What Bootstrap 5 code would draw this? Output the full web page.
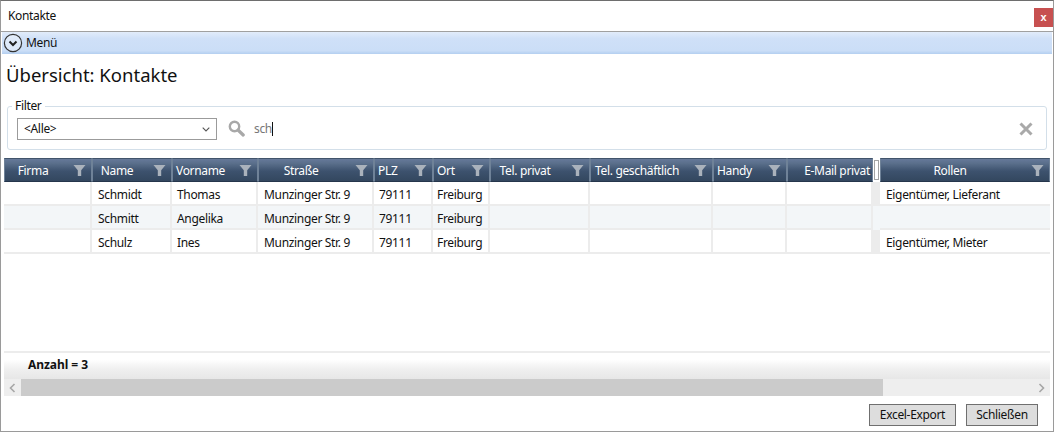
<!DOCTYPE html>
<html lang="de">
<head>
<meta charset="utf-8">
<title>Kontakte</title>
<link href="https://cdn.jsdelivr.net/npm/bootstrap@5.3.0/dist/css/bootstrap.min.css" rel="stylesheet">
<style>
html,body{height:100%;}
body{margin:0;background:#fff;color:#111;font:12px/16px "Noto Sans",sans-serif;letter-spacing:-.33px;overflow:hidden;}
.win{width:1054px;height:432px;border:1px solid #9a9a9a;border-top-color:#6e6e6e;display:flex;flex-direction:column;}
.titlebar{height:30px;padding:0 0 0 7px;flex:none;}
.wintitle{margin-top:7px;}
.closer{width:19px;height:19px;margin-top:7px;background:#c75050;color:#fff;font:bold 11px/17px "Liberation Sans",sans-serif;text-align:center;border:0;padding:0;}
.inner{flex:1;border-top:1px solid #a0a0a0;display:flex;flex-direction:column;min-height:0;}
.menubar{height:22px;margin:0 0 0 1px;width:1050px;background:linear-gradient(#e2ecfa 0,#cfe0f8 30%,#cbdef7 85%,#b3cff0 100%);display:flex;align-items:center;gap:3px;padding-left:1px;flex:none;}
.pagehead{font-size:18.5px;line-height:24px;font-weight:400;letter-spacing:0;margin:9px 0 0 5px;color:#111;flex:none;}
.filterbox{margin:19px 6px 0 6px;height:44px;border:1px solid #d3dfe9;border-radius:3px;padding:0 9px;position:relative;flex:none;width:1040px;}
.filterbox legend{float:none;width:auto;font-size:12px;line-height:14px;margin:-8px 0 0 -5px;padding:0 3px;display:block;position:absolute;background:#fff;}
.pick{width:200px;height:22px;margin-top:11px;border:1px solid #9b9b9b;padding:0 6px;display:flex;align-items:center;justify-content:space-between;}
.lens{margin:13px 0 0 11px;}
.term{color:#777;margin:11px 0 0 9px;line-height:22px;}
.caret{display:inline-block;width:1px;height:14px;background:#111;vertical-align:-3px;}
.wipe{margin:15px 4px 0 auto;}
.gridtable{table-layout:fixed;width:1046px;margin:8px 0 0 3px;border-collapse:separate;border-spacing:0;flex:none;}
.gridtable th{height:24px;padding:0;background:linear-gradient(#66799a 0,#5a6f8b 20%,#3d526e 55%,#33475f 100%);color:#fff;font-weight:400;border:1px solid #6f8298;border-bottom-color:#25364c;border-top-color:#42546b;}
.gridtable td{height:24px;padding:3px 0 0 5px;border-right:2px solid #ececec;border-bottom:2px solid #ececec;line-height:18px;background:#fff;white-space:nowrap;overflow:hidden;color:#111;}
.gridtable tr.alt td{background:#f3f6f8;}
.gridtable td:nth-child(2),.gridtable td:nth-child(4){padding-left:6px;}
.gridtable td:nth-child(6){padding-left:4px;}
.gridtable td.split{background:#ececec;padding:0;border:0;}
.gridtable td.last{border-right:0;padding-left:6px;}
.gridtable th.split{background:#fff;border:0;padding:0;}
.thin{display:flex;align-items:center;height:100%;padding:2px 5px 0 3px;}
.thin span{flex:1;white-space:nowrap;}
.thin .midwide{text-align:center;padding-right:15px;}
.thin .endtxt{text-align:right;margin-right:-3px;}
.thin .nudge{padding-left:1px;}
.funnel{margin-top:-2px;flex:none;}
.grip{display:block;width:5px;height:20px;background:#fff;border:1px solid #a4a4a4;margin:0 auto;}
.spacer{flex:1;min-height:0;}
.sumbar{margin-left:3px;width:1046px;height:28px;border-top:2px solid #ececec;background:linear-gradient(#fff 0,#fff 25%,#f0f0f0 60%,#e7e7e7 100%);padding:4px 0 0 24px;font-weight:700;letter-spacing:-.05px;flex:none;}
.hscroll{margin-left:3px;width:1046px;height:17px;background:#eee;display:flex;align-items:center;flex:none;}
.hscroll i{display:flex;width:17px;height:17px;align-items:center;justify-content:center;flex:none;}
.thumbbar{width:862px;height:17px;background:#cbcbcb;flex:none;}
.footbar{height:35px;padding:8px 15px 0 0;gap:10px;flex:none;}
.graybtn{height:22px;background:#dddddd;border:1px solid #6f6f6f;font:12px/18px "Noto Sans",sans-serif;letter-spacing:-.33px;color:#111;padding:0;border-radius:0;}
.w1{width:87px;}.w2{width:72px;}
</style>
</head>
<body>
<div class="win">
  <div class="titlebar d-flex justify-content-between">
    <span class="wintitle">Kontakte</span>
    <button class="closer" type="button">x</button>
  </div>
  <div class="inner">
    <div class="menubar">
      <svg width="20" height="20" viewBox="0 0 20 20"><circle cx="10" cy="10" r="8.6" fill="#fff" fill-opacity=".35" stroke="#333" stroke-width="1.2"/><path d="M6.5 8.5 10 12l3.5-3.5" fill="none" stroke="#222" stroke-width="2"/></svg>
      <span>Menü</span>
    </div>
    <h1 class="pagehead">Übersicht: Kontakte</h1>
    <fieldset class="filterbox d-flex">
      <legend>Filter</legend>
      <div class="pick"><span>&lt;Alle&gt;</span><svg width="8" height="5" viewBox="0 0 8 5"><path d="M.7.7 4 4 7.3.7" fill="none" stroke="#555" stroke-width="1.1"/></svg></div>
      <svg class="lens" width="17" height="17" viewBox="0 0 17 17"><circle cx="6.5" cy="6.5" r="4.7" fill="none" stroke="#a8a8a8" stroke-width="2.4"/><path d="M10 10l5.2 5" stroke="#a8a8a8" stroke-width="3.2" stroke-linecap="round"/></svg>
      <div class="term">sch<span class="caret"></span></div>
      <svg class="wipe" width="14" height="14" viewBox="0 0 14 14"><path d="M1.5 1.5l11 11M12.5 1.5l-11 11" stroke="#a9a9a9" stroke-width="3"/></svg>
    </fieldset>
    <table class="gridtable">
      <colgroup><col style="width:88px"><col style="width:80px"><col style="width:86px"><col style="width:116px"><col style="width:59px"><col style="width:57px"><col style="width:100px"><col style="width:123px"><col style="width:74px"><col style="width:86px"><col style="width:7px"><col style="width:170px"></colgroup>
      <thead><tr>
        <th><div class="thin"><span class="midwide">Firma</span><svg class="funnel" width="13" height="13" viewBox="0 0 13 13"><path d="M.5 1h12L8.2 6.2V12H4.8V6.2z" fill="#aab2bc"/></svg></div></th>
        <th><div class="thin"><span class="midwide">Name</span><svg class="funnel" width="13" height="13" viewBox="0 0 13 13"><path d="M.5 1h12L8.2 6.2V12H4.8V6.2z" fill="#aab2bc"/></svg></div></th>
        <th><div class="thin"><span>Vorname</span><svg class="funnel" width="13" height="13" viewBox="0 0 13 13"><path d="M.5 1h12L8.2 6.2V12H4.8V6.2z" fill="#aab2bc"/></svg></div></th>
        <th><div class="thin"><span class="midwide">Straße</span><svg class="funnel" width="13" height="13" viewBox="0 0 13 13"><path d="M.5 1h12L8.2 6.2V12H4.8V6.2z" fill="#aab2bc"/></svg></div></th>
        <th><div class="thin"><span>PLZ</span><svg class="funnel" width="13" height="13" viewBox="0 0 13 13"><path d="M.5 1h12L8.2 6.2V12H4.8V6.2z" fill="#aab2bc"/></svg></div></th>
        <th><div class="thin"><span>Ort</span><svg class="funnel" width="13" height="13" viewBox="0 0 13 13"><path d="M.5 1h12L8.2 6.2V12H4.8V6.2z" fill="#aab2bc"/></svg></div></th>
        <th><div class="thin"><span class="midwide">Tel. privat</span><svg class="funnel" width="13" height="13" viewBox="0 0 13 13"><path d="M.5 1h12L8.2 6.2V12H4.8V6.2z" fill="#aab2bc"/></svg></div></th>
        <th><div class="thin"><span class="nudge">Tel. geschäftlich</span><svg class="funnel" width="13" height="13" viewBox="0 0 13 13"><path d="M.5 1h12L8.2 6.2V12H4.8V6.2z" fill="#aab2bc"/></svg></div></th>
        <th><div class="thin"><span>Handy</span><svg class="funnel" width="13" height="13" viewBox="0 0 13 13"><path d="M.5 1h12L8.2 6.2V12H4.8V6.2z" fill="#aab2bc"/></svg></div></th>
        <th><div class="thin"><span class="endtxt">E-Mail privat</span></div></th>
        <th class="split"><b class="grip"></b></th>
        <th><div class="thin"><span class="midwide">Rollen</span><svg class="funnel" width="13" height="13" viewBox="0 0 13 13"><path d="M.5 1h12L8.2 6.2V12H4.8V6.2z" fill="#aab2bc"/></svg></div></th>
      </tr></thead>
      <tbody>
        <tr><td></td><td>Schmidt</td><td>Thomas</td><td>Munzinger Str. 9</td><td>79111</td><td>Freiburg</td><td></td><td></td><td></td><td></td><td class="split"></td><td class="last">Eigentümer, Lieferant</td></tr>
        <tr class="alt"><td></td><td>Schmitt</td><td>Angelika</td><td>Munzinger Str. 9</td><td>79111</td><td>Freiburg</td><td></td><td></td><td></td><td></td><td class="split"></td><td class="last"></td></tr>
        <tr><td></td><td>Schulz</td><td>Ines</td><td>Munzinger Str. 9</td><td>79111</td><td>Freiburg</td><td></td><td></td><td></td><td></td><td class="split"></td><td class="last">Eigentümer, Mieter</td></tr>
      </tbody>
    </table>
    <div class="spacer"></div>
    <div class="sumbar">Anzahl = 3</div>
    <div class="hscroll">
      <i><svg width="7" height="10" viewBox="0 0 7 10"><path d="M5.5 1 1.5 5l4 4" fill="none" stroke="#a6a6a6" stroke-width="1.6"/></svg></i>
      <div class="thumbbar"></div>
      <i class="ms-auto"><svg width="7" height="10" viewBox="0 0 7 10"><path d="M1.5 1l4 4-4 4" fill="none" stroke="#a6a6a6" stroke-width="1.6"/></svg></i>
    </div>
    <div class="footbar d-flex justify-content-end">
      <button type="button" class="graybtn w1">Excel-Export</button>
      <button type="button" class="graybtn w2">Schließen</button>
    </div>
  </div>
</div>
</body>
</html>
